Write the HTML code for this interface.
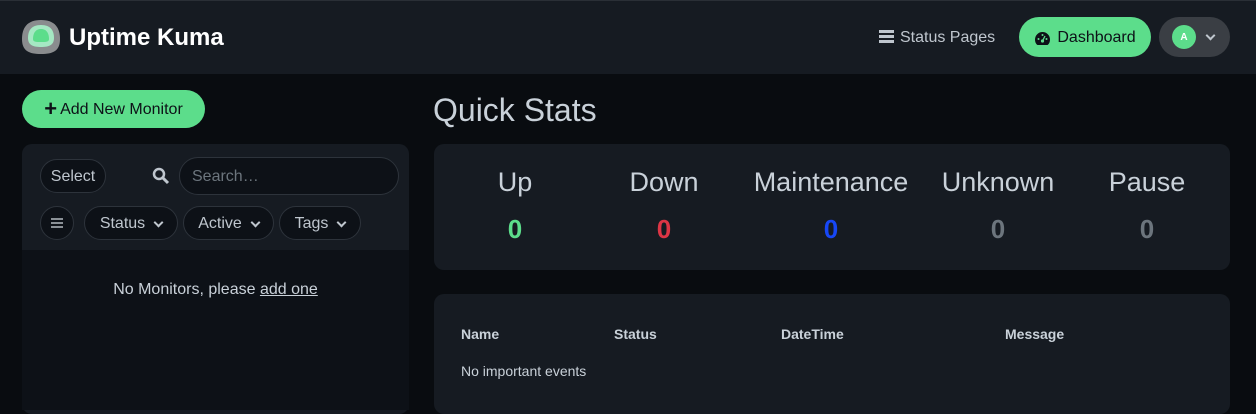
<!DOCTYPE html>
<html><head><style>
*{box-sizing:border-box;margin:0;padding:0}
body{width:1256px;height:404px;overflow:hidden;background:#090c10;font-family:"Liberation Sans",sans-serif;color:#dee2e6;position:relative}
.hdr{position:absolute;left:0;top:0;width:1256px;height:74px;background:#161b22;border-top:1px solid #2a2f36}
.abs{position:absolute}
.pill{position:absolute;border-radius:20px;border:1px solid #2d333b;background:#0d1117;color:#bfc6ce;font-size:16px;display:flex;align-items:center;justify-content:center;gap:6px;padding-top:2px}
.chev{width:7px;height:7px;border-right:2px solid #bfc6ce;border-bottom:2px solid #bfc6ce;transform:rotate(45deg);margin-top:-4px;margin-left:4px}
.stat{position:absolute;top:167px;width:160px;text-align:center;font-size:27px;color:#c9d1d9}
.num{position:absolute;top:214px;width:160px;text-align:center;font-size:26px;font-weight:bold}
.th{position:absolute;top:326px;font-size:14px;font-weight:bold;color:#c9d1d9}
</style></head><body>
<div class="hdr"></div>
<svg class="abs" style="left:21px;top:19px" width="40" height="36" viewBox="0 0 40 36"><path d="M20 1C34 1 39 9 39 20C39 32 32 35 20 35C8 35 1 32 1 20C1 9 6 1 20 1Z" fill="#8a8c8e"/><path d="M20 6C30 6 33 12 33 19C33 26 28 28 20 28C12 28 7 26 7 19C7 12 10 6 20 6Z" fill="#a5e8c3"/><path d="M20 10C26 10 28 15 28 20C28 23 25 23 20 23C15 23 12 23 12 20C12 15 14 10 20 10Z" fill="#5cdd8b"/></svg>
<div class="abs" style="left:69px;top:24px;font-size:24px;font-weight:bold;color:#fff">Uptime Kuma</div>
<div class="abs" style="left:879px;top:30px;width:15px;height:3px;background:#bfc6ce;box-shadow:0 5px 0 #bfc6ce,0 10px 0 #bfc6ce"></div>
<div class="abs" style="left:900px;top:29px;font-size:16px;color:#bfc6ce">Status Pages</div>
<div class="abs" style="left:1019px;top:17px;width:132px;height:40px;border-radius:20px;background:#5cdd8b;color:#0d1117;font-size:16px;display:flex;align-items:center;justify-content:center;gap:6px;padding-top:2px"><svg width="17" height="15" viewBox="0 0 17 15"><path d="M8.5 1A7.5 7.5 0 0 0 1 8.5C1 11 2 13 3.5 14H13.5C15 13 16 11 16 8.5A7.5 7.5 0 0 0 8.5 1Z" fill="#0d1117"/><circle cx="8.5" cy="10" r="1.6" fill="#5cdd8b"/><path d="M8.5 10L11 5" stroke="#5cdd8b" stroke-width="1.3"/><circle cx="4.5" cy="8" r="1" fill="#5cdd8b"/><circle cx="12.5" cy="8" r="1" fill="#5cdd8b"/><circle cx="8.5" cy="4" r="1" fill="#5cdd8b"/></svg>Dashboard</div>
<div class="abs" style="left:1159px;top:17px;width:71px;height:40px;border-radius:20px;background:#3a3e44"></div>
<div class="abs" style="left:1172px;top:25px;width:24px;height:24px;border-radius:50%;background:#5cdd8b;color:#fff;font-size:10px;font-weight:bold;text-align:center;line-height:25px">A</div>
<div class="abs chev" style="left:1207px;top:32px;margin:0;border-color:#bfc6ce"></div>
<div class="abs" style="left:22px;top:90px;width:183px;height:38px;border-radius:19px;background:#5cdd8b;color:#0d1117;font-size:16px;display:flex;align-items:center;justify-content:center;padding-top:2px"><b style="font-size:22px;margin-right:3px;margin-top:-3px">+</b>Add New Monitor</div>
<div class="abs" style="left:22px;top:144px;width:387px;height:270px;border-radius:10px;background:#161b22"></div>
<div class="abs" style="left:22px;top:250px;width:387px;height:160px;background:#0d1117"></div>
<div class="pill" style="left:40px;top:159px;width:66px;height:34px">Select</div>
<svg class="abs" style="left:152px;top:167px" width="18" height="18" viewBox="0 0 18 18"><circle cx="7" cy="7" r="5" stroke="#bfc6ce" stroke-width="2.5" fill="none"/><path d="M11 11L16 16" stroke="#bfc6ce" stroke-width="3"/></svg>
<div class="pill" style="left:179px;top:157px;width:220px;height:38px;justify-content:flex-start;padding-left:12px;color:#6c757d">Search…</div>
<div class="pill" style="left:40px;top:206px;width:34px;height:34px;padding-top:0"><div style="width:12px;height:2px;background:#8a9096;box-shadow:0 4px 0 #8a9096,0 -4px 0 #8a9096"></div></div>
<div class="pill" style="left:84px;top:206px;width:94px;height:34px">Status<span class="chev"></span></div>
<div class="pill" style="left:183px;top:206px;width:91px;height:34px">Active<span class="chev"></span></div>
<div class="pill" style="left:279px;top:206px;width:82px;height:34px">Tags<span class="chev"></span></div>
<div class="abs" style="left:22px;top:281px;width:387px;text-align:center;font-size:16px;color:#c9d1d9">No Monitors, please <u>add one</u></div>
<div class="abs" style="left:433px;top:92px;font-size:32px;color:#c9d1d9">Quick Stats</div>
<div class="abs" style="left:434px;top:144px;width:796px;height:126px;border-radius:10px;background:#161b22"></div>
<div class="stat" style="left:435px">Up</div><div class="stat" style="left:584px">Down</div><div class="stat" style="left:751px">Maintenance</div><div class="stat" style="left:918px">Unknown</div><div class="stat" style="left:1067px">Pause</div>
<div class="num" style="left:435px;color:#5cdd8b">0</div><div class="num" style="left:584px;color:#dc3545">0</div><div class="num" style="left:751px;color:#1747f5">0</div><div class="num" style="left:918px;color:#6c757d">0</div><div class="num" style="left:1067px;color:#6c757d">0</div>
<div class="abs" style="left:434px;top:294px;width:796px;height:120px;border-radius:10px;background:#161b22"></div>
<div class="th" style="left:461px">Name</div><div class="th" style="left:614px">Status</div><div class="th" style="left:781px">DateTime</div><div class="th" style="left:1005px">Message</div>
<div class="abs" style="left:461px;top:363px;font-size:14px;color:#c9d1d9">No important events</div>
</body></html>
